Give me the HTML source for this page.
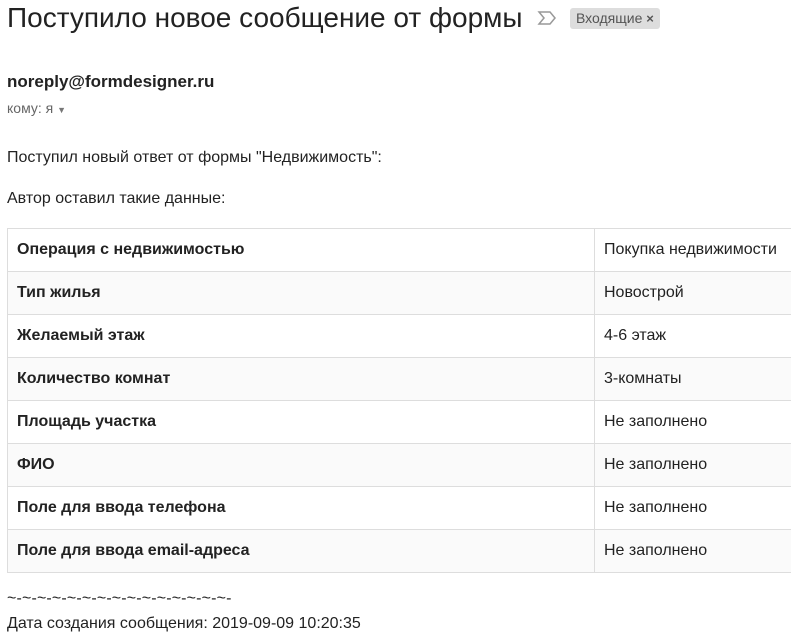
<!DOCTYPE html>
<html><head><meta charset="utf-8"><style>
body{margin:0;background:#fff;font-family:"Liberation Sans",sans-serif;color:#222;width:791px;height:637px;overflow:hidden;position:relative}
.a{position:absolute;white-space:nowrap}
h1{position:absolute;left:7px;top:2px;margin:0;font-weight:normal;font-size:28px;color:#222;white-space:nowrap}
.tag{position:absolute;left:570px;top:8px;background:#ddd;border-radius:3px;font-size:14px;color:#555;padding:2px 6px;height:17px;line-height:17px}
table{position:absolute;left:7px;top:228px;border-collapse:collapse;width:820px;font-size:16px}
td{border:1px solid #ddd;height:42px;padding:0 9px;color:#222}
td:first-child{width:568px;font-weight:bold}
tr:nth-child(even) td{background:#fafafa}
</style></head><body>
<h1>Поступило новое сообщение от формы</h1>
<svg class="a" style="left:537px;top:10px" width="20" height="16" viewBox="0 0 20 16"><path d="M2 2h11l5 6-5 6H2l5-6z" fill="none" stroke="#999" stroke-width="1.5"/></svg>
<div class="tag">Входящие <b style="font-size:13px">×</b></div>
<div class="a" style="left:7px;top:72px;font-size:17px;font-weight:bold;color:#222">noreply@formdesigner.ru</div>
<div class="a" style="left:7px;top:100px;font-size:14px;color:#666">кому: я <span style="font-size:9px;color:#777">▼</span></div>
<div class="a" style="left:7px;top:149px;font-size:16px">Поступил новый ответ от формы "Недвижимость":</div>
<div class="a" style="left:7px;top:190px;font-size:16px">Автор оставил такие данные:</div>
<table>
<tr><td>Операция с недвижимостью</td><td>Покупка недвижимости</td></tr>
<tr><td>Тип жилья</td><td>Новострой</td></tr>
<tr><td>Желаемый этаж</td><td>4-6 этаж</td></tr>
<tr><td>Количество комнат</td><td>3-комнаты</td></tr>
<tr><td>Площадь участка</td><td>Не заполнено</td></tr>
<tr><td>ФИО</td><td>Не заполнено</td></tr>
<tr><td>Поле для ввода телефона</td><td>Не заполнено</td></tr>
<tr><td>Поле для ввода email-адреса</td><td>Не заполнено</td></tr>
</table>
<div class="a" style="left:7px;top:590px;font-size:16px;letter-spacing:0.15px">~-~-~-~-~-~-~-~-~-~-~-~-~-~-~-</div>
<div class="a" style="left:7px;top:615px;font-size:16px">Дата создания сообщения: 2019-09-09 10:20:35</div>
</body></html>
